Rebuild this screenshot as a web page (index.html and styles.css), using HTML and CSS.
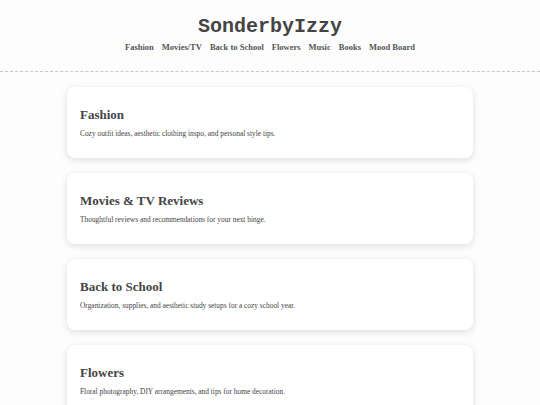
FILE: index.html
```html
<!DOCTYPE html>
<html lang="en">
<head>
<meta charset="utf-8">
<title>SonderbyIzzy</title>
<link rel="stylesheet" href="styles.css">
</head>
<body>
<header class="site-header">
  <h1 class="logo">SonderbyIzzy</h1>
  <nav class="nav">
    <a href="#">Fashion</a>
    <a href="#">Movies/TV</a>
    <a href="#">Back to School</a>
    <a href="#">Flowers</a>
    <a href="#">Music</a>
    <a href="#">Books</a>
    <a href="#">Mood Board</a>
  </nav>
</header>
<main class="content">
  <section class="card">
    <h2>Fashion</h2>
    <p>Cozy outfit ideas, aesthetic clothing inspo, and personal style tips.</p>
  </section>
  <section class="card">
    <h2>Movies &amp; TV Reviews</h2>
    <p>Thoughtful reviews and recommendations for your next binge.</p>
  </section>
  <section class="card">
    <h2>Back to School</h2>
    <p>Organization, supplies, and aesthetic study setups for a cozy school year.</p>
  </section>
  <section class="card">
    <h2>Flowers</h2>
    <p>Floral photography, DIY arrangements, and tips for home decoration.</p>
  </section>
</main>
</body>
</html>
```
FILE: styles.css
```css
html, body {
  margin: 0;
  padding: 0;
}
body {
  background: #fdfdfd;
  font-family: "Liberation Serif", "Times New Roman", serif;
  color: #444;
}
.site-header {
  text-align: center;
  padding-top: 14px;
  padding-bottom: 18px;
  border-bottom: 1px dashed #c8c8c8;
}
.logo {
  margin: 0;
  font-family: "Liberation Mono", "Courier New", monospace;
  font-size: 20px;
  font-weight: bold;
  color: #444;
  line-height: 26px;
}
.nav {
  display: flex;
  justify-content: center;
  gap: 8px;
  margin-top: 1px;
}
.nav a {
  font-size: 8.5px;
  font-weight: bold;
  color: #555;
  text-decoration: none;
  line-height: 12px;
}
.content {
  max-width: 406px;
  margin: 15px auto 0;
  display: flex;
  flex-direction: column;
  gap: 15px;
}
.card {
  background: #fff;
  border-radius: 8px;
  box-shadow: 0 2px 7px rgba(0, 0, 0, 0.13);
  padding: 20px 13px 19px;
}
.card h2 {
  margin: 0 0 6px;
  font-size: 13px;
  line-height: 16px;
  font-weight: bold;
  color: #444;
}
.card p {
  margin: 0;
  font-size: 7.4px;
  line-height: 10px;
  color: #444;
}
```
